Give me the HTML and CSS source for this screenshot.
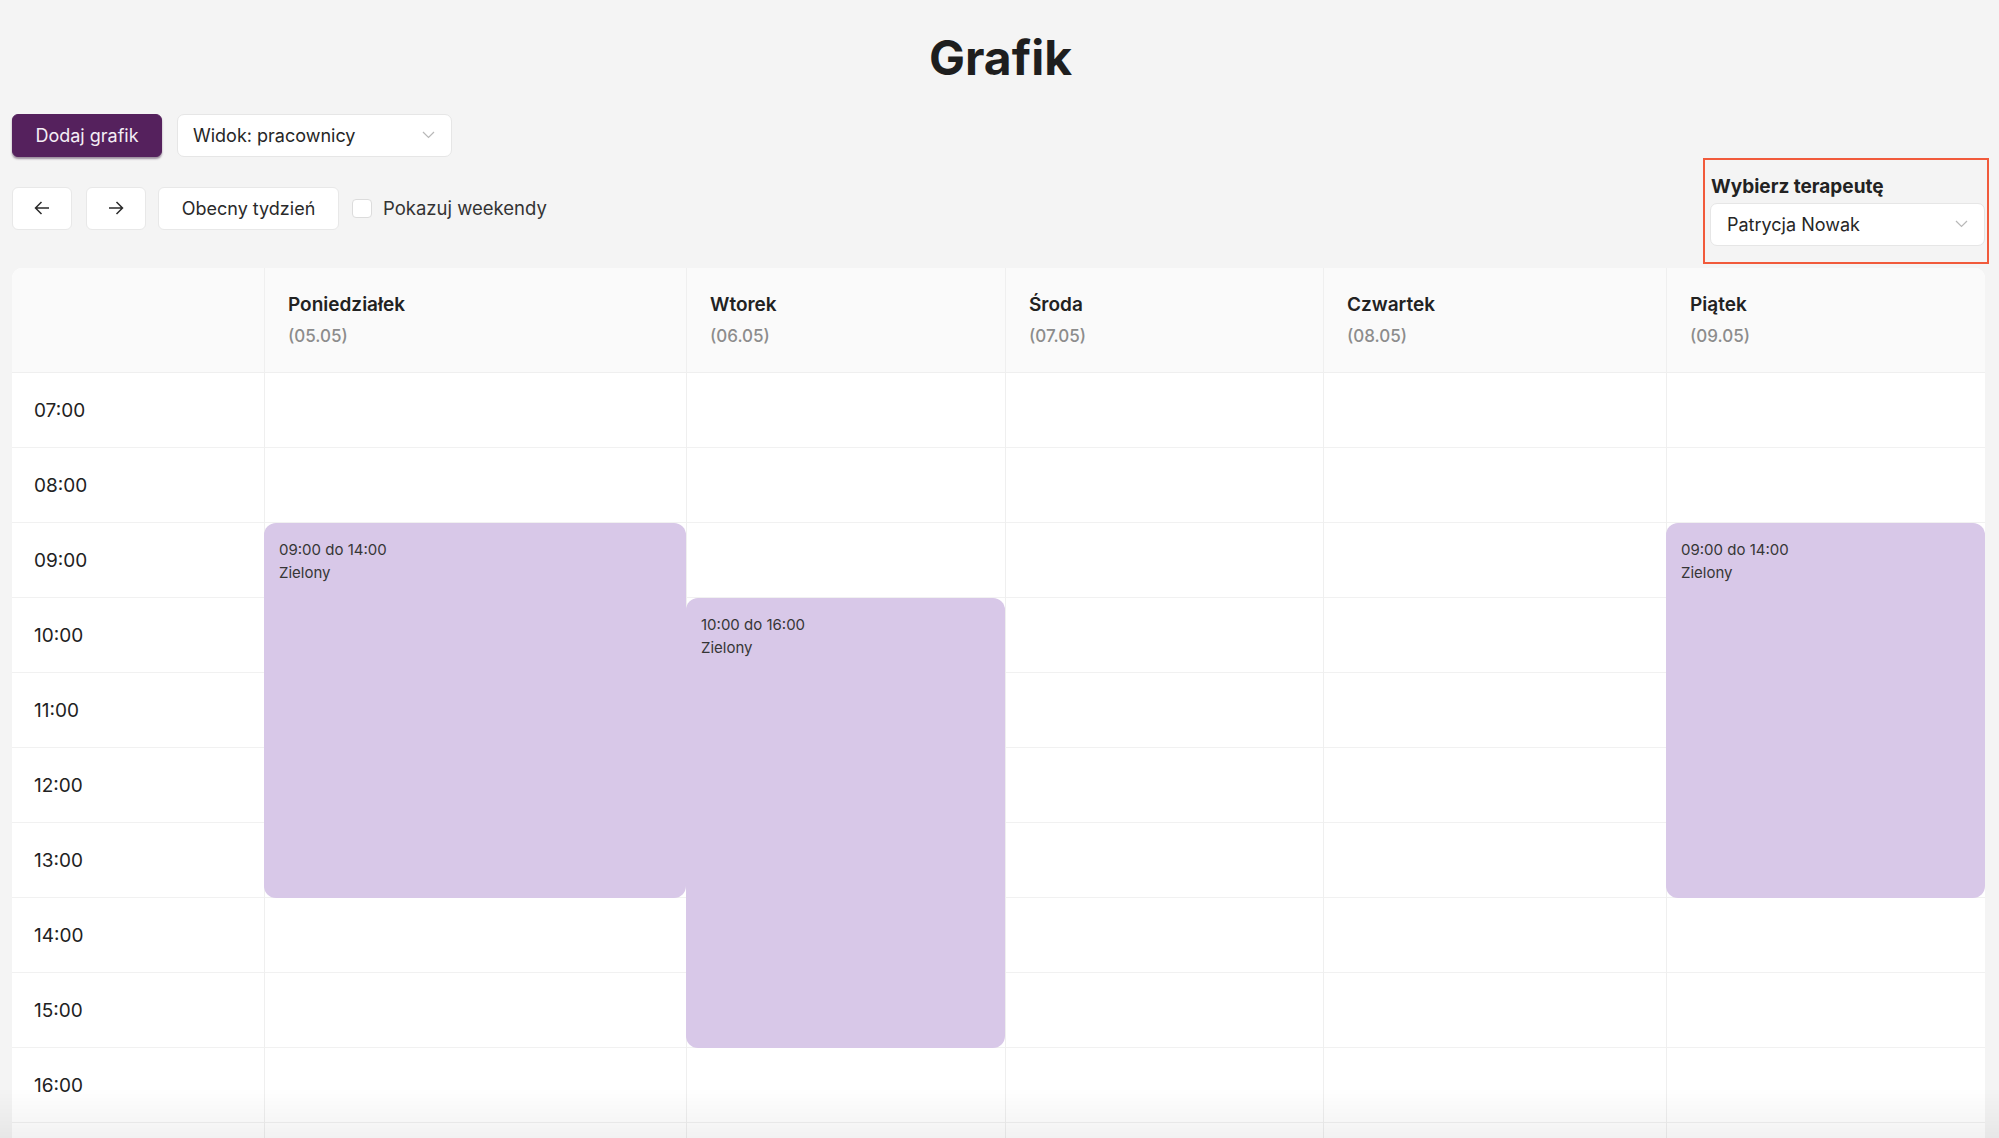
FILE: index.html
```html
<!DOCTYPE html>
<html lang="pl">
<head>
    <meta charset="UTF-8">
    <meta name="viewport" content="width=device-width, initial-scale=1.0">
    <title>Grafik</title>
    <link rel="stylesheet" href="styles.css">
</head>
<body>
    <div class="page">
        <h1 class="title">Grafik</h1>

        <div class="toolbar">
            <div class="toolbar-left">
                <div class="toolbar-row">
                    <button class="btn btn-primary">Dodaj grafik</button>
                    <div class="select">
                        <span>Widok: pracownicy</span>
                        <svg class="chevron" width="13" height="8" viewBox="0 0 13 8"><path d="M1 1l5.5 5.5L12 1" fill="none" stroke="#b8b8b8" stroke-width="1.2"/></svg>
                    </div>
                </div>
                <div class="toolbar-row">
                    <button class="btn btn-icon">
                        <svg width="16" height="14" viewBox="0 0 16 14"><path d="M15 7H1.5M7.5 1L1.5 7l6 6" fill="none" stroke="#2a2a2a" stroke-width="1.5"/></svg>
                    </button>
                    <button class="btn btn-icon btn-next">
                        <svg width="16" height="14" viewBox="0 0 16 14"><path d="M1 7h13.5M8.5 1l6 6-6 6" fill="none" stroke="#2a2a2a" stroke-width="1.5"/></svg>
                    </button>
                    <button class="btn btn-plain">Obecny tydzień</button>
                    <label class="check">
                        <span class="check-box"></span>
                        <span>Pokazuj weekendy</span>
                    </label>
                </div>
            </div>

            <div class="picker">
                <div class="picker-label">Wybierz terapeutę</div>
                <div class="select">
                    <span>Patrycja Nowak</span>
                    <svg class="chevron" width="13" height="8" viewBox="0 0 13 8"><path d="M1 1l5.5 5.5L12 1" fill="none" stroke="#b8b8b8" stroke-width="1.2"/></svg>
                </div>
            </div>
        </div>

        <div class="calendar">
            <div class="cal-col cal-col-time">
                <div class="cal-head"></div>
                <div class="cal-slot">07:00</div>
                <div class="cal-slot">08:00</div>
                <div class="cal-slot">09:00</div>
                <div class="cal-slot">10:00</div>
                <div class="cal-slot">11:00</div>
                <div class="cal-slot">12:00</div>
                <div class="cal-slot">13:00</div>
                <div class="cal-slot">14:00</div>
                <div class="cal-slot">15:00</div>
                <div class="cal-slot">16:00</div>
                <div class="cal-slot"></div>
            </div>

            <div class="cal-col">
                <div class="cal-head">
                    <div class="day-name">Poniedziałek</div>
                    <div class="day-date">(05.05)</div>
                </div>
                <div class="cal-slots">
                    <div class="cal-slot"></div><div class="cal-slot"></div><div class="cal-slot"></div>
                    <div class="cal-slot"></div><div class="cal-slot"></div><div class="cal-slot"></div>
                    <div class="cal-slot"></div><div class="cal-slot"></div><div class="cal-slot"></div>
                    <div class="cal-slot"></div><div class="cal-slot"></div>
                    <div class="shift" style="top: 150px; height: 375px;">
                        <div>09:00 do 14:00</div>
                        <div>Zielony</div>
                    </div>
                </div>
            </div>

            <div class="cal-col">
                <div class="cal-head">
                    <div class="day-name">Wtorek</div>
                    <div class="day-date">(06.05)</div>
                </div>
                <div class="cal-slots">
                    <div class="cal-slot"></div><div class="cal-slot"></div><div class="cal-slot"></div>
                    <div class="cal-slot"></div><div class="cal-slot"></div><div class="cal-slot"></div>
                    <div class="cal-slot"></div><div class="cal-slot"></div><div class="cal-slot"></div>
                    <div class="cal-slot"></div><div class="cal-slot"></div>
                    <div class="shift" style="top: 225px; height: 450px;">
                        <div>10:00 do 16:00</div>
                        <div>Zielony</div>
                    </div>
                </div>
            </div>

            <div class="cal-col">
                <div class="cal-head">
                    <div class="day-name">Środa</div>
                    <div class="day-date">(07.05)</div>
                </div>
                <div class="cal-slots">
                    <div class="cal-slot"></div><div class="cal-slot"></div><div class="cal-slot"></div>
                    <div class="cal-slot"></div><div class="cal-slot"></div><div class="cal-slot"></div>
                    <div class="cal-slot"></div><div class="cal-slot"></div><div class="cal-slot"></div>
                    <div class="cal-slot"></div><div class="cal-slot"></div>
                </div>
            </div>

            <div class="cal-col">
                <div class="cal-head">
                    <div class="day-name">Czwartek</div>
                    <div class="day-date">(08.05)</div>
                </div>
                <div class="cal-slots">
                    <div class="cal-slot"></div><div class="cal-slot"></div><div class="cal-slot"></div>
                    <div class="cal-slot"></div><div class="cal-slot"></div><div class="cal-slot"></div>
                    <div class="cal-slot"></div><div class="cal-slot"></div><div class="cal-slot"></div>
                    <div class="cal-slot"></div><div class="cal-slot"></div>
                </div>
            </div>

            <div class="cal-col">
                <div class="cal-head">
                    <div class="day-name">Piątek</div>
                    <div class="day-date">(09.05)</div>
                </div>
                <div class="cal-slots">
                    <div class="cal-slot"></div><div class="cal-slot"></div><div class="cal-slot"></div>
                    <div class="cal-slot"></div><div class="cal-slot"></div><div class="cal-slot"></div>
                    <div class="cal-slot"></div><div class="cal-slot"></div><div class="cal-slot"></div>
                    <div class="cal-slot"></div><div class="cal-slot"></div>
                    <div class="shift" style="top: 150px; height: 375px;">
                        <div>09:00 do 14:00</div>
                        <div>Zielony</div>
                    </div>
                </div>
            </div>
        </div>
    </div>
    <div class="bottom-fade"></div>
</body>
</html>
```

FILE: styles.css
```css
* {
    box-sizing: border-box;
}
body {
    margin: 0;
    height: 100vh;
    overflow: hidden;
    background-color: #f4f4f4;
    font-family: Inter, "Noto Sans", sans-serif;
    color: #222;
}
.page {
    padding: 0 10px 0 12px;
}
.title {
    margin: 0;
    padding-top: 29px;
    font-size: 48px;
    line-height: 1.2;
    font-weight: 700;
    text-align: center;
    color: #1e1e1e;
}

/* toolbar */
.toolbar {
    display: flex;
    justify-content: space-between;
    align-items: flex-end;
    margin-top: 27px;
}
.toolbar-left {
    display: flex;
    flex-direction: column;
    gap: 30px;
    padding-bottom: 34px;
}
.toolbar-row {
    display: flex;
    align-items: center;
    gap: 15px;
}
.toolbar-row + .toolbar-row {
    gap: 12px;
}
.btn {
    height: 43px;
    border: 1px solid #e8e8e8;
    border-radius: 6px;
    background: #fff;
    font-family: inherit;
    font-size: 18px;
    color: #2a2a2a;
    display: flex;
    align-items: center;
    justify-content: center;
    padding: 0 21px;
    cursor: pointer;
}
.btn-primary {
    width: 150px;
    padding: 0;
    background: #55215d;
    border-color: #55215d;
    color: #f4eef5;
    box-shadow: 0 2px 2px rgba(50, 20, 55, 0.45);
}
.btn-icon {
    width: 60px;
    padding: 0;
}
.btn-next {
    margin-left: 2px;
}
.btn-plain {
    width: 181px;
    padding: 0;
}
.check {
    display: flex;
    align-items: center;
    gap: 11px;
    font-size: 18.5px;
    color: #333;
    margin-left: 1px;
}
.check-box {
    width: 20px;
    height: 19px;
    border: 1px solid #dcdcdc;
    border-radius: 4px;
    background: #fff;
}
.select {
    width: 275px;
    height: 43px;
    border: 1px solid #e6e6e6;
    border-radius: 7px;
    background: #fff;
    display: flex;
    align-items: center;
    justify-content: space-between;
    padding: 0 16px 0 15px;
    font-size: 18px;
    color: #262626;
}
.chevron {
    display: block;
}

/* therapist picker */
.picker {
    width: 286px;
    border: 2px solid #f15a3b;
    padding: 15px 2px 16px 5px;
}
.picker-label {
    font-size: 19px;
    line-height: 23px;
    font-weight: 700;
    color: #222;
    margin-bottom: 5px;
    padding-left: 1px;
}
.picker .select {
    padding-left: 16px;
}

/* calendar */
.calendar {
    margin-top: 4px;
    margin-right: 4px;
    display: grid;
    grid-template-columns: 252px 422px 319px 318px 343px 319px;
    background: #fff;
    border-radius: 10px 10px 0 0;
    overflow: hidden;
}
.cal-col + .cal-col {
    border-left: 1px solid #efefef;
}
.cal-head {
    height: 105px;
    background: #fafafa;
    border-bottom: 1px solid #efefef;
    padding: 25px 10px 0 23px;
}
.day-name {
    font-size: 19px;
    line-height: 23px;
    font-weight: 600;
    color: #222;
}
.day-date {
    margin-top: 10px;
    font-size: 17px;
    line-height: 21px;
    font-weight: 500;
    color: #8c8c8c;
}
.cal-slots {
    position: relative;
}
.cal-slot {
    height: 75px;
    border-bottom: 1px solid #f1f1f1;
}
.cal-col-time .cal-slot {
    display: flex;
    align-items: center;
    padding: 2px 0 0 22px;
    font-size: 19px;
    color: #222;
}
.shift {
    position: absolute;
    left: -1px;
    right: 0;
    background: #d8c8e8;
    border-radius: 12px;
    padding: 15px 15px;
    font-size: 15px;
    line-height: 23px;
    color: #363636;
}
.bottom-fade {
    position: fixed;
    left: 0;
    right: 0;
    bottom: 0;
    height: 50px;
    background: linear-gradient(to bottom, rgba(0, 0, 0, 0), rgba(0, 0, 0, 0.05));
    pointer-events: none;
}
```
